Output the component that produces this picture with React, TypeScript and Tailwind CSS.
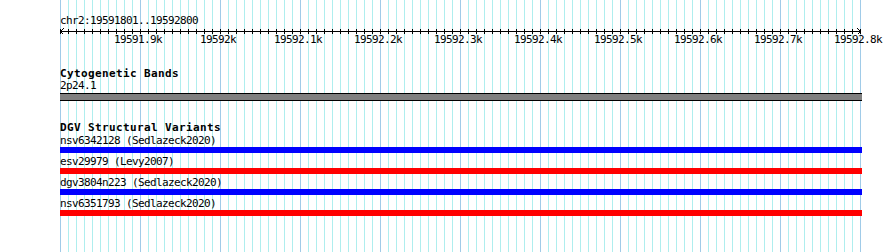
import React from "react";

const START = 19591800;
const BP_PER_PX = 1.25; // 1000 bp over 800 px

const majors = Array.from({ length: 10 }, (_, i) => START + (i + 1) * 100);
const minorTicks = Array.from({ length: 101 }, (_, i) => i * 8);

const variants = [
  { name: "nsv6342128 (Sedlazeck2020)", color: "bg-[#0000ff]" },
  { name: "esv29979 (Levy2007)", color: "bg-[#ff0000]" },
  { name: "dgv3804n223 (Sedlazeck2020)", color: "bg-[#0000ff]" },
  { name: "nsv6351793 (Sedlazeck2020)", color: "bg-[#ff0000]" },
];

function fmt(bp: number) {
  return `${Number((bp / 1000).toFixed(1))}k`;
}

function Ruler() {
  return (
    <div className="relative h-[20px]">
      <svg
        className="absolute left-0 top-0 overflow-visible"
        width={802}
        height={8}
        shapeRendering="crispEdges"
      >
        <line x1={0} y1={4.5} x2={800} y2={4.5} stroke="#000" />
        {minorTicks.map((x) => (
          <line key={x} x1={x + 0.5} y1={2} x2={x + 0.5} y2={7} stroke="#000" />
        ))}
        {/* arrow heads */}
        <polyline points="3.5,1.5 0.5,4.5 3.5,7.5" fill="none" stroke="#000" />
        <polyline points="797.5,1.5 800.5,4.5 797.5,7.5" fill="none" stroke="#000" />
      </svg>
      {majors.map((bp) => {
        const x = (bp - START) / BP_PER_PX;
        return (
          <span
            key={bp}
            className="absolute top-[7px] w-[80px] text-center whitespace-nowrap"
            style={{ left: x - 42 }}
          >
            {fmt(bp)}
          </span>
        );
      })}
    </div>
  );
}

export default function App() {
  return (
    <div className="w-[890px] h-[252px] bg-white overflow-hidden font-['DejaVu_Sans_Mono',monospace] text-[11px] leading-[12px] tracking-[-0.62px] text-black">
      <div className="ml-[60px] w-[801px] h-[252px] pt-[15px] bg-[linear-gradient(to_right,#a0cbe8_1px,transparent_1px),linear-gradient(to_right,#afeeee_1px,transparent_1px)] [background-size:80px_100%,8px_100%]">
        <div className="h-[12px] whitespace-nowrap">chr2:19591801..19592800</div>
        <Ruler />

        {/* Cytogenetic bands */}
        <div className="mt-[21px] h-[12px] font-bold tracking-[0.38px] whitespace-nowrap">Cytogenetic Bands</div>
        <div className="h-[12px]">2p24.1</div>
        <div className="mt-[1px] w-[802px] h-[8px] bg-[#808080] border-y border-black" />

        {/* DGV */}
        <div className="mt-[21px] h-[12px] font-bold tracking-[0.38px] whitespace-nowrap">DGV Structural Variants</div>
        <div className="mt-[1px] flex flex-col gap-[3px]">
          {variants.map((v) => (
            <div key={v.name}>
              <div className="h-[12px] whitespace-nowrap">{v.name}</div>
              <div className={`w-[802px] h-[6px] ${v.color}`} />
            </div>
          ))}
        </div>
      </div>
    </div>
  );
}
